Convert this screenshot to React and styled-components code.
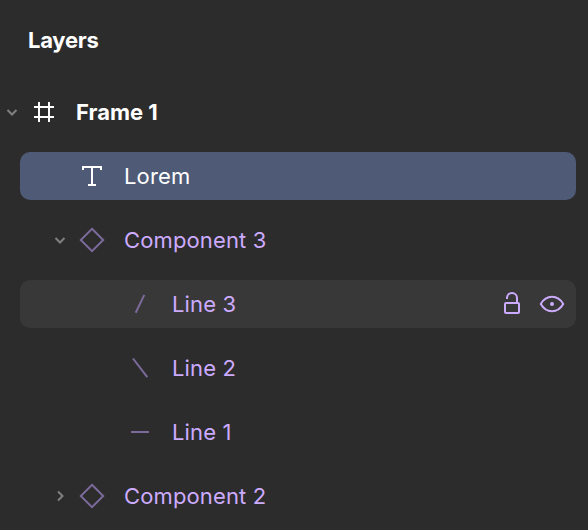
import React from "react";
import styled, { createGlobalStyle } from "styled-components";

const GlobalStyle = createGlobalStyle`
  * { box-sizing: border-box; }
  body { margin: 0; background: #2c2c2c; overflow: hidden; }
`;

const Panel = styled.aside`
  width: 588px;
  height: 530px;
  overflow: hidden;
  background: #2c2c2c;
  color: #fff;
  font-family: Inter, "Liberation Sans", sans-serif;
  font-size: 22px;
  line-height: 32px;
  letter-spacing: 0.13px;
`;

const Title = styled.h2`
  margin: 0;
  padding: 24px 28px 32px;
  font-size: 22px;
  font-weight: 650;
  line-height: 32px;
  letter-spacing: -0.25px;
`;

const Tree = styled.ul`
  display: flex;
  flex-direction: column;
  gap: 16px;
  margin: 0;
  padding: 0 12px 0 20px;
  list-style: none;
`;

const backgrounds = { selected: "#4e5a76", hover: "#383838" };

const Row = styled.li`
  display: flex;
  align-items: center;
  height: 48px;
  padding-right: 8px;
  border-radius: 10px;
  background: ${(p) => backgrounds[p.$state] || "transparent"};
  color: ${(p) => (p.$component ? "#ccabff" : "#fff")};
`;

const Toggle = styled.span`
  display: flex;
  flex: none;
  width: 24px;
  margin-left: ${(p) => p.$depth * 48 - 20}px;
  color: #808080;
`;

const LayerIcon = styled.span`
  display: flex;
  flex: none;
  justify-content: center;
  width: 40px;
  color: ${(p) => (p.$component ? "#7c6a9a" : "#fff")};
`;

const Label = styled.span`
  flex: 1;
  margin-left: 12px;
  font-weight: ${(p) => (p.$bold ? 650 : 400)};
  letter-spacing: ${(p) => (p.$bold ? "0" : "inherit")};
  white-space: nowrap;
`;

const Actions = styled.span`
  display: flex;
  gap: 8px;
`;

const Glyph = styled.svg`
  display: block;
  width: ${(p) => p.$size || 32}px;
  height: ${(p) => p.$size || 32}px;
  fill: none;
  stroke: currentColor;
  stroke-width: 2;
`;

const paths = {
  frame: "M11 6v20M21 6v20M6 11h20M6 21h20",
  text: "M7 10V7h18v3M16 7v18M12 25h8",
  component: "M16 4.8 27.2 16 16 27.2 4.8 16z",
  slash: "M11.7 24.8 20.3 6.9",
  backslash: "M9 6.5 23.3 25.2",
  dash: "M7 16h18",
};

const layers = [
  { name: "Frame 1", icon: "frame", depth: 0, toggle: "open", bold: true },
  { name: "Lorem", icon: "text", depth: 1, state: "selected" },
  { name: "Component 3", icon: "component", depth: 1, toggle: "open", component: true },
  { name: "Line 3", icon: "slash", depth: 2, component: true, state: "hover", actions: true },
  { name: "Line 2", icon: "backslash", depth: 2, component: true },
  { name: "Line 1", icon: "dash", depth: 2, component: true },
  { name: "Component 2", icon: "component", depth: 1, toggle: "closed", component: true },
];

function Chevron({ direction }) {
  return (
    <Glyph $size={24} viewBox="0 0 24 24">
      <path d={direction === "open" ? "M7.5 10 12 14.5 16.5 10" : "M10 7.5 14.5 12 10 16.5"} />
    </Glyph>
  );
}

function UnlockIcon() {
  return (
    <Glyph viewBox="0 0 32 32">
      <rect x="9" y="15" width="14" height="10" rx="1" />
      <path d="M11 11V10a5 5 0 0 1 10 0v5" />
    </Glyph>
  );
}

function EyeIcon() {
  return (
    <Glyph viewBox="0 0 32 32">
      <path d="M4.8 16C7.5 11.2 11.5 8.8 16 8.8S24.5 11.2 27.2 16C24.5 20.8 20.5 23.2 16 23.2S7.5 20.8 4.8 16z" />
      <circle cx="16" cy="16" r="2" fill="currentColor" stroke="none" />
    </Glyph>
  );
}

export default function App() {
  return (
    <>
      <GlobalStyle />
      <Panel>
        <Title>Layers</Title>
        <Tree>
          {layers.map((layer) => (
            <Row key={layer.name} $state={layer.state} $component={layer.component}>
              <Toggle $depth={layer.depth}>
                {layer.toggle && <Chevron direction={layer.toggle} />}
              </Toggle>
              <LayerIcon $component={layer.component}>
                <Glyph viewBox="0 0 32 32">
                  <path d={paths[layer.icon]} />
                </Glyph>
              </LayerIcon>
              <Label $bold={layer.bold}>{layer.name}</Label>
              {layer.actions && (
                <Actions>
                  <UnlockIcon />
                  <EyeIcon />
                </Actions>
              )}
            </Row>
          ))}
        </Tree>
      </Panel>
    </>
  );
}
